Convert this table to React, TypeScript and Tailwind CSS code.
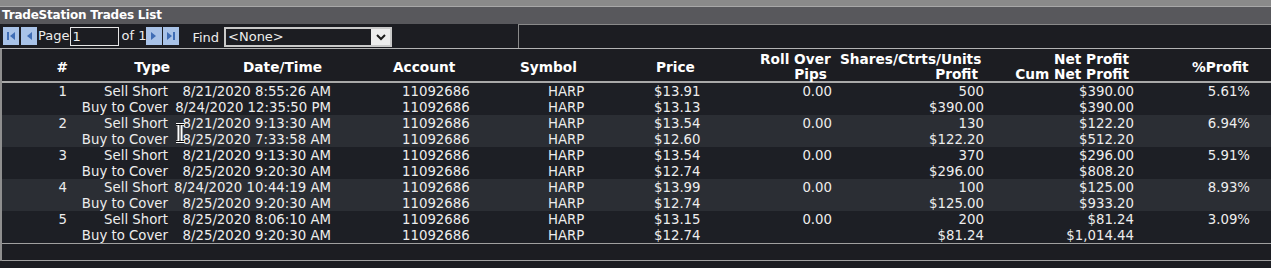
import React from 'react';

type Trade = {
  n: number;
  entry: string;
  exit: string;
  entryPrice: string;
  exitPrice: string;
  shares: string;
  profit: string;
  net: string;
  cum: string;
  pct: string;
};

const TRADES: Trade[] = [
  { n: 1, entry: '8/21/2020 8:55:26 AM', exit: '8/24/2020 12:35:50 PM', entryPrice: '$13.91', exitPrice: '$13.13', shares: '500', profit: '$390.00', net: '$390.00', cum: '$390.00', pct: '5.61%' },
  { n: 2, entry: '8/21/2020 9:13:30 AM', exit: '8/25/2020 7:33:58 AM', entryPrice: '$13.54', exitPrice: '$12.60', shares: '130', profit: '$122.20', net: '$122.20', cum: '$512.20', pct: '6.94%' },
  { n: 3, entry: '8/21/2020 9:13:30 AM', exit: '8/25/2020 9:20:30 AM', entryPrice: '$13.54', exitPrice: '$12.74', shares: '370', profit: '$296.00', net: '$296.00', cum: '$808.20', pct: '5.91%' },
  { n: 4, entry: '8/24/2020 10:44:19 AM', exit: '8/25/2020 9:20:30 AM', entryPrice: '$13.99', exitPrice: '$12.74', shares: '100', profit: '$125.00', net: '$125.00', cum: '$933.20', pct: '8.93%' },
  { n: 5, entry: '8/25/2020 8:06:10 AM', exit: '8/25/2020 9:20:30 AM', entryPrice: '$13.15', exitPrice: '$12.74', shares: '200', profit: '$81.24', net: '$81.24', cum: '$1,014.44', pct: '3.09%' },
];

// column widths line up header and rows (first col is 2px short for the left border)
const COLS = 'grid grid-cols-[70px_100px_164px_176px_88px_160px_80px_150px_150px_131px]';

/** Small pager button: pale blue square with a dark blue glyph. */
function NavButton({ kind }: { kind: 'first' | 'prev' | 'next' | 'last' }) {
  return (
    <div className="w-[16px] h-[18px] bg-[#a9c3e8] flex items-center justify-center">
      <svg width="10" height="10" viewBox="0 0 10 10" aria-hidden>
        {kind === 'first' && (
          <>
            <rect x="1" y="1" width="2" height="8" fill="#3f6db5" />
            <path d="M9 1 L4 5 L9 9 Z" fill="#3f6db5" />
          </>
        )}
        {kind === 'prev' && <path d="M8 1 L3 5 L8 9 Z" fill="#3f6db5" />}
        {kind === 'next' && <path d="M2 1 L7 5 L2 9 Z" fill="#3f6db5" />}
        {kind === 'last' && (
          <>
            <path d="M1 1 L6 5 L1 9 Z" fill="#3f6db5" />
            <rect x="7" y="1" width="2" height="8" fill="#3f6db5" />
          </>
        )}
      </svg>
    </div>
  );
}

function Two({ a, b, className }: { a: React.ReactNode; b?: React.ReactNode; className: string }) {
  return (
    <div className={className}>
      <div className="h-[16px] pt-[1px] leading-[15px] whitespace-nowrap">{a}</div>
      <div className="h-[16px] pt-[1px] leading-[15px] whitespace-nowrap">{b ?? '\u00a0'}</div>
    </div>
  );
}

export default function App() {
  return (
    <div className="relative w-[1271px] h-[268px] overflow-hidden bg-[#1c1d22] text-[13.3px] text-[#ededed] font-['DejaVu_Sans',Verdana,sans-serif]">
      <div className="h-[6px] bg-[#8a8a8a]" />
      <div className="h-px bg-[#a8a8a8]" />
      <div className="h-[17px] bg-[#58585c] pl-[2px] text-[12px] font-bold leading-[17px] text-white tracking-[-0.2px]">
        TradeStation Trades List
      </div>

      {/* pager / find toolbar */}
      <div className="flex h-[24px] text-[13px]">
        <div className="w-[518px] flex items-center">
          <div className="ml-[3px] flex gap-[2px]">
            <NavButton kind="first" />
            <NavButton kind="prev" />
          </div>
          <span className="ml-[1px] mt-[-1px]">Page</span>
          <div className="ml-[1px] w-[49px] h-[19px] border border-[#e6e6e6] pl-[1px] leading-[17px]">1</div>
          <span className="ml-[2px]">of 1</span>
          <div className="flex gap-[1px]">
            <NavButton kind="next" />
            <NavButton kind="last" />
          </div>
          <span className="ml-[13px] mt-[3px]">Find</span>
          <div className="ml-[5px] mt-[2px] w-[168px] h-[20px] border-2 border-[#c9c9c9] flex items-center">
            <span className="flex-1 pl-[2px] leading-[16px]">&lt;None&gt;</span>
            <div className="w-[19px] h-full bg-[#ececec] flex items-center justify-center">
              <svg width="10" height="7" viewBox="0 0 10 7" aria-hidden>
                <path d="M1 1 L5 5 L9 1" stroke="#1a1a1a" strokeWidth="2" fill="none" />
              </svg>
            </div>
          </div>
        </div>
        <div className="flex-1 border-l border-t border-[#8a8a8a]" />
      </div>
      <div className="h-px bg-[#b4b4b4]" />

      <div className="border-l-2 border-[#8f8f8f]">
        {/* header */}
        <div className={`${COLS} h-[32px] pt-[3px] font-bold text-white text-[13.7px] leading-[15px] items-center`}>
          <div className="text-right pr-[4px]">#</div>
          <div className="text-right pr-[2px]">Type</div>
          <div className="pl-[71px]">Date/Time</div>
          <div className="pl-[57px]">Account</div>
          <div className="pl-[8px]">Symbol</div>
          <div className="pl-[56px]">Price</div>
          <div className="text-right pr-[13px] whitespace-nowrap">
            <div>Roll Over</div>
            <div>Pips</div>
          </div>
          <div className="text-right pr-[12px] whitespace-nowrap">
            <div>Shares/Ctrts/Units</div>
            <div>Profit</div>
          </div>
          <div className="text-right pr-[11px] whitespace-nowrap">
            <div>Net Profit</div>
            <div>Cum Net Profit</div>
          </div>
          <div className="pl-[52px]">%Profit</div>
        </div>
        <div className="h-[2px] bg-[#a9a9a9]" />

        {TRADES.map((t, i) => (
          <div key={t.n} className={`${COLS} ${i % 2 === 1 ? 'bg-[#2b2e34]' : 'bg-[#1d1f25]'}`}>
            <Two className="text-right pr-[5px]" a={t.n} />
            <Two className="text-right pr-[4px]" a="Sell Short" b="Buy to Cover" />
            <Two className="text-right pr-[5px]" a={t.entry} b={t.exit} />
            <Two className="pl-[66px]" a="11092686" b="11092686" />
            <Two className="pl-[36px]" a="HARP" b="HARP" />
            <Two className="pl-[54px]" a={t.entryPrice} b={t.exitPrice} />
            <Two className="text-right pr-[8px]" a="0.00" />
            <Two className="text-right pr-[6px]" a={t.shares} b={t.profit} />
            <Two className="text-right pr-[6px]" a={t.net} b={t.cum} />
            <Two className="text-right pr-[21px]" a={t.pct} />
          </div>
        ))}
        <div className="h-px bg-[#a0a0a0]" />
        <div className="h-[16px]" />
        <div className="h-px bg-[#a0a0a0]" />
      </div>

      {/* mouse I-beam caught in the screenshot */}
      <svg className="absolute left-[175px] top-[123px]" width="10" height="20" viewBox="0 0 10 20" aria-hidden>
        <path d="M1 1 H4 V19 H1 M9 1 H6 V19 H9 M4 1 V19" stroke="#ffffff" strokeWidth="3" fill="none" />
        <path d="M1 1.5 H9 M5 1.5 V18.5 M1 18.5 H9" stroke="#000000" strokeWidth="1" fill="none" />
      </svg>
    </div>
  );
}
